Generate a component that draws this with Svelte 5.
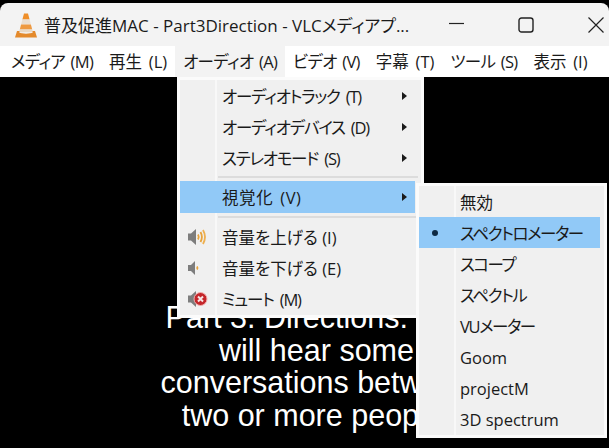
<script>
  const menus = [
    { text: "メディア (M)", kana: true },
    { text: "再生 (L)" },
    { text: "オーディオ (A)", kana: true },
    { text: "ビデオ (V)", kana: true },
    { text: "字幕 (T)" },
    { text: "ツール (S)", kana: true },
    { text: "表示 (I)" }
  ];
  const visuals = [
    { text: "無効" },
    { text: "スペクトロメーター", kana: true },
    { text: "スコープ", kana: true },
    { text: "スペクトル", kana: true },
    { text: "VUメーター", kana: true },
    { text: "Goom" },
    { text: "projectM" },
    { text: "3D spectrum" }
  ];
  const lines = [
    "Part 3. Directions: You",
    "will hear some",
    "conversations between",
    "two or more people."
  ];
</script>

<div class="window">
  <header class="titlebar">
    <svg class="cone" width="22" height="25" viewBox="0 0 22 25">
      <path d="M9 .5h4l1.600 6H7.400z" fill="#ef8f2a" />
      <path d="M7.400 6.500h7.200l1.300 5H6.100z" fill="#eadfd2" />
      <path d="M6.100 11.500h9.800l1.300 5H4.800z" fill="#ee9a42" />
      <path d="M4.800 16.500h12.400l.8 2.700H4z" fill="#e9d9c6" />
      <path d="M2 18h2.600l-.4 1.500c2 1.500 11.600 1.500 13.600 0l-.4-1.500H20l2 6.500H0z" fill="#e48a2c" />
    </svg>
    <span class="title">普及促進MAC - Part3Direction - VLCメディアプ...</span>
    <div class="controls">
      <svg width="16" height="16" viewBox="0 0 16 16"><path d="M1 6.500h15" stroke="#222" stroke-width="1.200" /></svg>
      <svg width="16" height="16" viewBox="0 0 16 16"><rect x="1" y="1" width="14" height="14" rx="2.500" fill="none" stroke="#222" stroke-width="1.400" /></svg>
      <svg width="16" height="16" viewBox="0 0 16 16"><path d="M.500.500l15 15M15.500.500l-15 15" stroke="#222" stroke-width="1.200" /></svg>
    </div>
  </header>

  <nav class="menubar">
    {#each menus as m, i}
      <span class="top" class:kana={m.kana} class:open={i === 2}>{m.text}</span>
    {/each}
  </nav>

  <main class="video">
    {#each lines as l}
      <div>{l}</div>
    {/each}
  </main>
</div>

<div class="menu audio">
  <div class="item"><span class="label kana">オーディオトラック (T)</span><i class="arrow"></i></div>
  <div class="item"><span class="label kana">オーディオデバイス (D)</span><i class="arrow"></i></div>
  <div class="item"><span class="label kana">ステレオモード (S)</span><i class="arrow"></i></div>
  <div class="sep"></div>
  <div class="item active"><span class="label wide">視覚化 (V)</span><i class="arrow"></i></div>
  <div class="sep"></div>
  <div class="item">
    <svg class="icon" width="22" height="20" viewBox="0 0 22 20">
      <path d="M1 6.500h3l5-4.500v16l-5-4.500H1z" fill="#7d7d7d" />
      <path d="M11 7.500q1.500 2.500 0 5" stroke="#e8a33a" stroke-width="1.800" fill="none" />
      <path d="M13.500 5q2.800 5 0 10" stroke="#e8a33a" stroke-width="1.800" fill="none" />
      <path d="M16 3q4 7 0 14" stroke="#eeb050" stroke-width="1.800" fill="none" />
    </svg>
    <span class="label">音量を上げる (I)</span>
  </div>
  <div class="item">
    <svg class="icon" width="22" height="20" viewBox="0 0 22 20">
      <path d="M1 7h3l4-4v14l-4-4H1z" fill="#7d7d7d" />
      <path d="M10 8.500q1 1.500 0 3" stroke="#e8a33a" stroke-width="1.800" fill="none" />
    </svg>
    <span class="label">音量を下げる (E)</span>
  </div>
  <div class="item">
    <svg class="icon" width="22" height="20" viewBox="0 0 22 20">
      <path d="M1 6.500h3l5-4.500v16l-5-4.500H1z" fill="#7d7d7d" />
      <circle cx="13.500" cy="10" r="6.500" fill="#c4262a" stroke="#f3b0b0" />
      <path d="M11 7.500l5 5M16 7.500l-5 5" stroke="#f6e6e6" stroke-width="2" />
    </svg>
    <span class="label kana">ミュート (M)</span>
  </div>

  <div class="menu sub">
    {#each visuals as v, i}
      <div class="item" class:active={i === 1}>
        {#if i === 1}<b class="dot"></b>{/if}
        <span class="label" class:tight={v.kana}>{v.text}</span>
      </div>
    {/each}
  </div>
</div>

<style>
  :global(body) {
    margin: 0;
    background: #000;
    overflow: hidden;
  }

  .window {
    width: 609px;
    height: 448px;
    box-sizing: border-box;
    padding-top: 3px;
    display: flex;
    flex-direction: column;
    font-family: "Open Sans", "Noto Sans CJK JP", sans-serif;
    font-feature-settings: "palt";
    color: #1a1a1a;
  }

  .titlebar {
    height: 43px;
    flex: none;
    background: #f3f3f3;
    border-radius: 8px 8px 0 0;
    display: flex;
    align-items: center;
    padding-left: 15px;
    box-sizing: border-box;
  }

  .cone {
    flex: none;
    margin-top: 2px;
  }

  .title {
    margin-left: 7px;
    font-size: 17px;
    white-space: nowrap;
  }

  .controls {
    margin-left: auto;
    display: flex;
    gap: 54px;
    padding-right: 5px;
  }

  .menubar {
    height: 31px;
    flex: none;
    background: #fff;
    display: flex;
    align-items: center;
    padding-left: 3px;
    font-size: 16.500px;
    white-space: nowrap;
    word-spacing: 2.500px;
  }

  .top {
    padding: 0 8px;
    height: 31px;
    line-height: 32px;
  }

  .top.kana {
    letter-spacing: -0.700px;
    word-spacing: 2px;
  }

  .top.open {
    background: #f3f3f3;
  }

  .video {
    flex: 1;
    background: #000;
    color: #fff;
    font-family: "Liberation Sans", sans-serif;
    font-size: 30.500px;
    line-height: 32.500px;
    text-align: center;
    padding: 224px 0 0 24px;
    white-space: nowrap;
  }

  .menu {
    position: absolute;
    box-sizing: border-box;
    background-color: #f0f0f0;
    background-image: linear-gradient(#f8f8f8, #f8f8f8);
    background-size: 2px 100%;
    background-position: 35px 0;
    background-repeat: no-repeat;
    border: 3px solid #fbfbfb;
    font-family: "Open Sans", "Noto Sans CJK JP", sans-serif;
    font-feature-settings: "palt";
    font-size: 16.500px;
    color: #1a1a1a;
  }

  .audio {
    left: 177px;
    top: 77px;
    width: 247px;
    height: 241px;
  }

  .sub {
    left: 236px;
    top: 103px;
    width: 191px;
    height: 255px;
  }

  .item {
    position: relative;
    height: 31px;
    display: flex;
    align-items: center;
    white-space: nowrap;
  }

  .sub .item {
    height: 31.150px;
  }

  .item.active {
    background: #91c9f7;
  }

  .audio > .item.active {
    height: 32px;
    margin-right: 6px;
  }

  .sub .item.active {
    margin-right: 4px;
  }

  .label {
    position: absolute;
    left: 42px;
  }

  .label.kana {
    letter-spacing: -1.200px;
    word-spacing: 3px;
  }

  .label.wide {
    letter-spacing: 0.600px;
    word-spacing: 2px;
  }

  .sub .label {
    left: 41px;
  }

  .label.tight {
    letter-spacing: -1.400px;
  }

  .arrow {
    position: absolute;
    left: 222px;
    width: 0;
    height: 0;
    border-left: 5px solid #1a1a1a;
    border-top: 4.500px solid transparent;
    border-bottom: 4.500px solid transparent;
  }

  .icon {
    position: absolute;
    left: 7px;
  }

  .dot {
    position: absolute;
    left: 13px;
    width: 6px;
    height: 6px;
    border-radius: 50%;
    background: #0e2a44;
  }

  .sep {
    height: 2px;
    margin: 3px 3px 3px 38px;
    background: #dcdcdc;
  }
</style>
